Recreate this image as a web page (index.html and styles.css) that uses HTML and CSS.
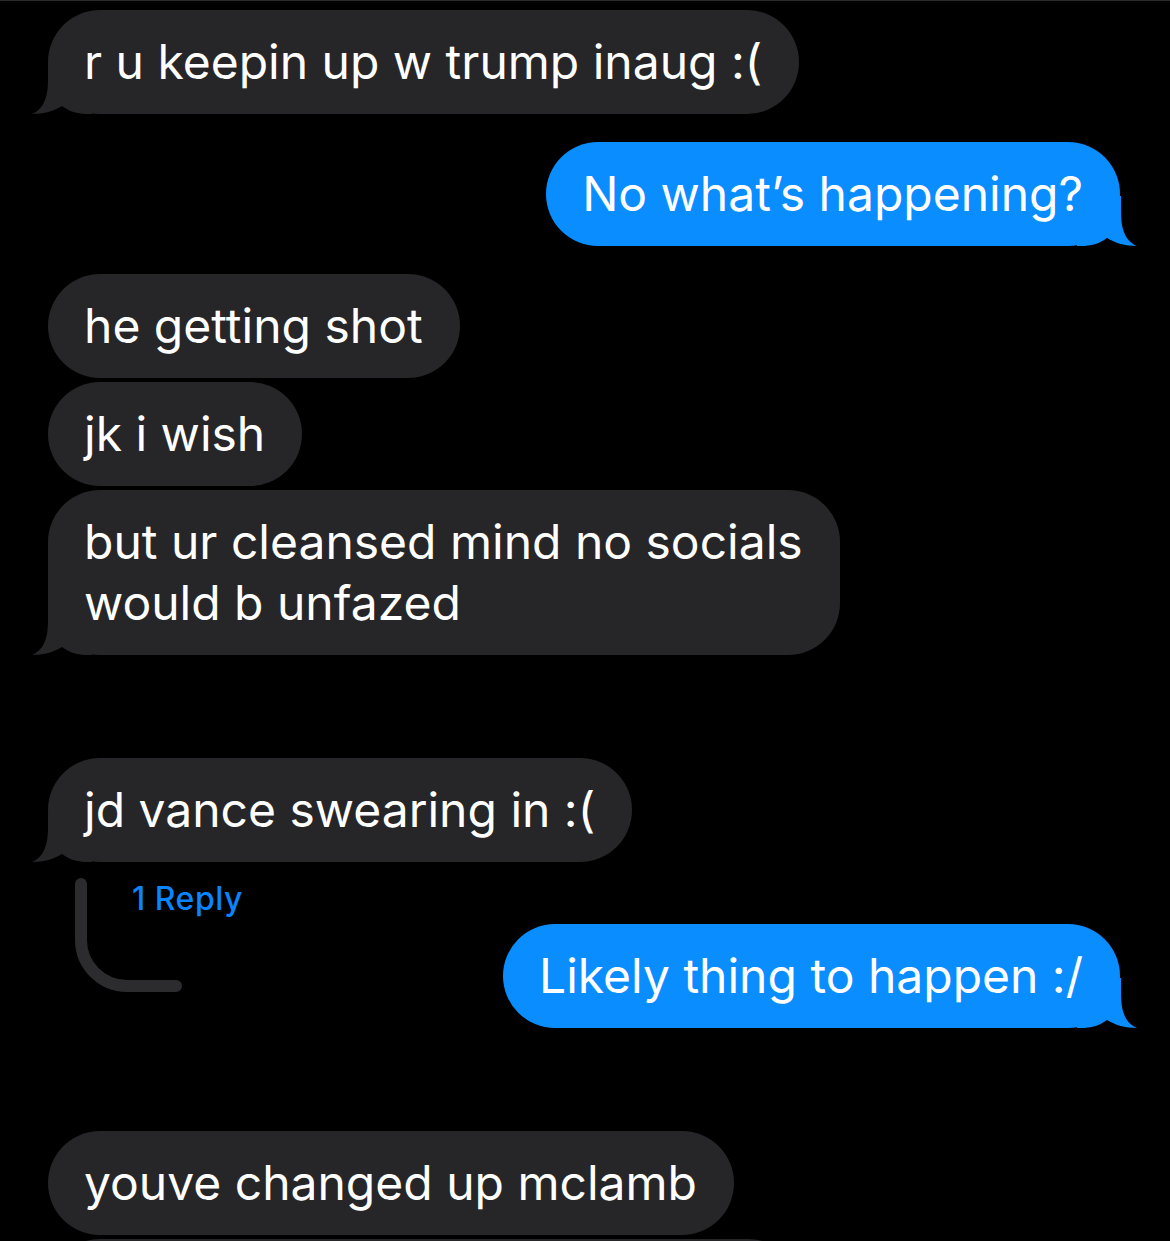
FILE: index.html
```html
<!DOCTYPE html>
<html lang="en">
<head>
<meta charset="utf-8">
<title>Messages</title>
<link rel="stylesheet" href="styles.css">
</head>
<body>
<div class="chat">
  <div class="bubble in">
    <svg class="tail tail-in" viewBox="0 0 60 50" width="60" height="50"><path d="M16,0 L16,16 C16,36 10,46 0,50 C12,50 22,47 30,42 C38,48 46,50 56,50 L60,50 L60,0 Z"/></svg>
    <span class="txt">r u keepin up w trump inaug :(</span>
  </div>
  <div class="bubble out gap-m">
    <svg class="tail tail-out" viewBox="0 0 60 50" width="60" height="50"><path d="M16,0 L16,16 C16,36 10,46 0,50 C12,50 22,47 30,42 C38,48 46,50 56,50 L60,50 L60,0 Z"/></svg>
    <span class="txt">No what’s happening?</span>
  </div>
  <div class="bubble in gap-m">
    <span class="txt">he getting shot</span>
  </div>
  <div class="bubble in gap-s">
    <span class="txt">jk i wish</span>
  </div>
  <div class="bubble in gap-s">
    <svg class="tail tail-in" viewBox="0 0 60 50" width="60" height="50"><path d="M16,0 L16,16 C16,36 10,46 0,50 C12,50 22,47 30,42 C38,48 46,50 56,50 L60,50 L60,0 Z"/></svg>
    <span class="txt">but ur cleansed mind no socials<br>would b unfazed</span>
  </div>
  <div class="bubble in gap-l">
    <svg class="tail tail-in" viewBox="0 0 60 50" width="60" height="50"><path d="M16,0 L16,16 C16,36 10,46 0,50 C12,50 22,47 30,42 C38,48 46,50 56,50 L60,50 L60,0 Z"/></svg>
    <span class="txt">jd vance swearing in :(</span>
  </div>
  <div class="thread">
    <svg class="thread-line" width="190" height="132" viewBox="0 0 190 132"><path d="M33,22 L33,78 A46,46 0 0 0 79,124 L128,124"/></svg>
    <span class="reply">1 Reply</span>
    <div class="bubble out thread-bubble">
      <svg class="tail tail-out" viewBox="0 0 60 50" width="60" height="50"><path d="M16,0 L16,16 C16,36 10,46 0,50 C12,50 22,47 30,42 C38,48 46,50 56,50 L60,50 L60,0 Z"/></svg>
      <span class="txt">Likely thing to happen :/</span>
    </div>
  </div>
  <div class="bubble in gap-l">
    <span class="txt">youve changed up mclamb</span>
  </div>
  <div class="bubble in gap-s partial">
    <span class="txt">&nbsp;</span>
  </div>
</div>
</body>
</html>
```

FILE: styles.css
```css
html, body {
  margin: 0;
  padding: 0;
  background: #000;
}
body {
  border-top: 1px solid #2a2a2c;
  overflow: hidden;
  height: 1240px;
}
.chat {
  display: flex;
  flex-direction: column;
  padding: 9px 50px 0 48px;
  font-family: "Inter", "Noto Sans", sans-serif;
}
.bubble {
  position: relative;
  align-self: flex-start;
  box-sizing: border-box;
  padding: 21px 37px 22px 36px;
  border-radius: 52px;
  font-size: 48px;
  line-height: 61px;
  letter-spacing: 0;
  color: #fff;
  white-space: nowrap;
}
.in {
  background: #262628;
}
.out {
  align-self: flex-end;
  background: #0a8dff;
}
.in .tail path { fill: #262628; }
.out .tail path { fill: #0a8dff; }
.txt {
  position: relative;
}
.tail {
  position: absolute;
  bottom: 0;
  display: block;
}
.tail-in {
  left: -16px;
}
.tail-out {
  right: -17px;
  transform: scaleX(-1);
}
.gap-s { margin-top: 4px; }
.gap-m { margin-top: 28px; }
.gap-l { margin-top: 103px; }

.thread {
  display: grid;
  grid-template-columns: 84px 1fr;
  grid-template-rows: 62px auto;
}
.thread-line {
  grid-column: 1;
  grid-row: 1 / 3;
  align-self: start;
  overflow: visible;
}
.thread-line path {
  fill: none;
  stroke: #2c2c2e;
  stroke-width: 12;
  stroke-linecap: round;
}
.reply {
  grid-column: 2;
  grid-row: 1;
  align-self: center;
  margin-top: 10px;
  font-size: 32px;
  font-weight: 500;
  color: #0a84ff;
  letter-spacing: 0.5px;
}
.thread-bubble {
  grid-column: 2;
  grid-row: 2;
  justify-self: end;
}
.partial {
  width: 752px;
}
```
